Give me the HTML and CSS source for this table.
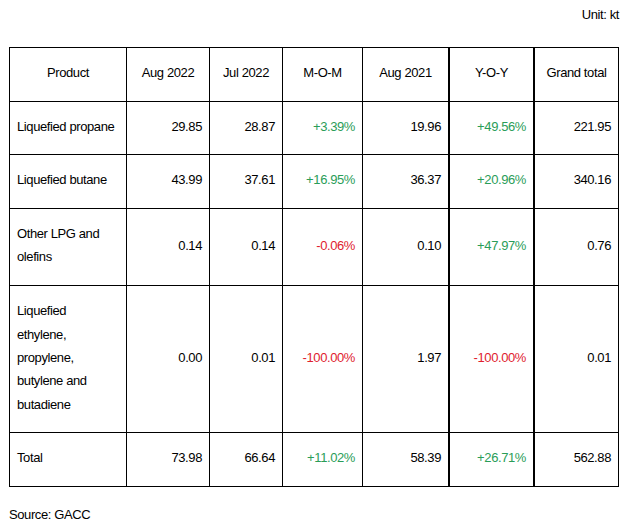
FILE: index.html
```html
<!DOCTYPE html>
<html>
<head>
<meta charset="utf-8">
<link rel="stylesheet" href="styles.css">
</head>
<body>
<div class="page">
  <div class="unit">Unit: kt</div>
  <table class="data">
    <thead>
      <tr>
        <th class="c1">Product</th>
        <th class="c2">Aug 2022</th>
        <th class="c3">Jul 2022</th>
        <th class="c4">M-O-M</th>
        <th class="c5 thick">Aug 2021</th>
        <th class="c6 thick">Y-O-Y</th>
        <th class="c7">Grand total</th>
      </tr>
    </thead>
    <tbody>
      <tr>
        <td class="name">Liquefied propane</td>
        <td>29.85</td><td>28.87</td><td class="up">+3.39%</td>
        <td class="thick">19.96</td><td class="up thick">+49.56%</td><td>221.95</td>
      </tr>
      <tr>
        <td class="name">Liquefied butane</td>
        <td>43.99</td><td>37.61</td><td class="up">+16.95%</td>
        <td class="thick">36.37</td><td class="up thick">+20.96%</td><td>340.16</td>
      </tr>
      <tr>
        <td class="name">Other LPG and olefins</td>
        <td>0.14</td><td>0.14</td><td class="down">-0.06%</td>
        <td class="thick">0.10</td><td class="up thick">+47.97%</td><td>0.76</td>
      </tr>
      <tr>
        <td class="name">Liquefied ethylene, propylene, butylene and butadiene</td>
        <td>0.00</td><td>0.01</td><td class="down">-100.00%</td>
        <td class="thick">1.97</td><td class="down thick">-100.00%</td><td>0.01</td>
      </tr>
      <tr>
        <td class="name">Total</td>
        <td>73.98</td><td>66.64</td><td class="up">+11.02%</td>
        <td class="thick">58.39</td><td class="up thick">+26.71%</td><td>562.88</td>
      </tr>
    </tbody>
  </table>
  <div class="source">Source: GACC</div>
</div>
</body>
</html>
```

FILE: styles.css
```css
html, body {
  margin: 0;
  padding: 0;
  background: #ffffff;
}

body {
  font-family: "Liberation Sans", Arial, sans-serif;
  font-size: 13px;
  letter-spacing: -0.4px;
  color: #000000;
}

.page {
  width: 610px;
  padding: 7px 0 0 9px;
}

.unit {
  text-align: right;
  line-height: 16px;
  height: 16px;
  margin-bottom: 24px;
}

.data {
  border-collapse: separate;
  border-spacing: 0;
  table-layout: fixed;
  width: 610px;
  border-top: 1px solid #000;
  border-left: 1px solid #000;
}

.data th,
.data td {
  box-sizing: border-box;
  border-right: 1px solid #000;
  border-bottom: 1px solid #000;
  padding: 13px 7px 16.4px;
  line-height: 23.33px;
  font-weight: normal;
  vertical-align: middle;
}

.data th {
  text-align: center;
}

.data td {
  text-align: right;
}

.data td.name {
  text-align: left;
  padding-right: 10px;
}

.data .thick {
  border-right-width: 2px;
}

.c1 { width: 117px; }
.c2 { width: 83px; }
.c3 { width: 73px; }
.c4 { width: 80px; }
.c5 { width: 87px; }
.c6 { width: 85px; }
.c7 { width: 84px; }

.up { color: #2a9d58; }
.down { color: #e0212e; }

.source {
  margin-top: 20px;
  line-height: 16px;
}
```
